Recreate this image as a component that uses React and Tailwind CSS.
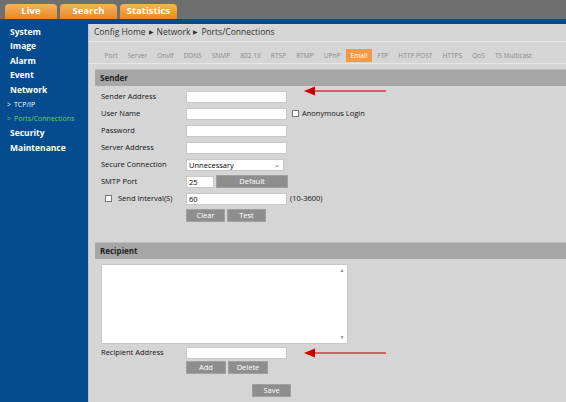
import React from "react";

const font = { fontFamily: '"Open Sans", "Noto Sans", sans-serif' };

function Arrow({ top }) {
  return (
    <svg className="absolute" style={{ left: 303, top: top - 6 }} width="86" height="12" viewBox="0 0 86 12">
      <line x1="10" y1="6" x2="83" y2="6" stroke="#d23a3a" strokeWidth="1.3" />
      <polygon points="1,6 12,1.5 12,10.5" fill="#c80000" />
    </svg>
  );
}

function Input({ w = "w-[101px]", children }) {
  return (
    <div className={`${w} h-[12px] bg-white border border-[#c8c8c8] text-[7.5px] leading-[10px] pl-[2px] text-black`}>{children}</div>
  );
}

function Btn({ w = "w-[39px]", children }) {
  return (
    <div className={`${w} h-[13px] bg-[#8e8e8e] border border-[#a0a0a0] text-white text-[7.5px] leading-[11px] flex items-center justify-center`}>{children}</div>
  );
}

function Row({ label, children, check }) {
  return (
    <div className="h-[17px] flex items-center">
      <div className="w-[85px] flex items-center text-[7.5px] text-[#111]">
        {check && <div className="w-[7px] h-[7px] border border-[#777] bg-white ml-[4px] mr-[6px]" />}
        {label}
      </div>
      {children}
    </div>
  );
}

export default function App() {
  const tabs = ["Port", "Server", "Onvif", "DDNS", "SNMP", "802.1X", "RTSP", "RTMP", "UPnP", "Email", "FTP", "HTTP POST", "HTTPS", "QoS", "TS Multicast"];
  const side = [
    ["System", 0],
    ["Image", 0],
    ["Alarm", 0],
    ["Event", 0],
    ["Network", 0],
    ["TCP/IP", 1],
    ["Ports/Connections", 2],
    ["Security", 0],
    ["Maintenance", 0],
  ];
  return (
    <div className="w-[566px] h-[402px] overflow-hidden relative flex flex-col bg-[#054b8f]" style={font}>
      {/* top bar */}
      <div className="h-[19px] bg-[#6f6f6f] flex items-end pl-[5px] gap-[3px] shrink-0">
        {["Live", "Search", "Statistics"].map((t, i) => (
          <div
            key={t}
            className={`${i === 0 ? "w-[52px]" : "w-[57px]"} h-[15px] rounded-t-[4px] bg-gradient-to-b from-[#f6b35a] to-[#e48a22] text-white font-bold text-[9.5px] flex items-center justify-center`}
          >
            {t}
          </div>
        ))}
      </div>
      <div className="flex flex-1 pt-[5px]">
        {/* sidebar */}
        <div className="w-[88px] shrink-0 flex flex-col pt-[1px]">
          {side.map(([t, k]) => (
            <div key={t} className="h-[14.5px] flex items-center">
              {k === 0 ? (
                <span className="pl-[10px] text-white font-bold text-[8.5px]">{t}</span>
              ) : (
                <span className={`pl-[7px] text-[7px] ${k === 2 ? "text-[#5fd35f]" : "text-white"}`}>
                  <span className="mr-[3px]">&gt;</span>
                  {t}
                </span>
              )}
            </div>
          ))}
        </div>
        {/* content */}
        <div className="flex-1 bg-[#d5d5d5] border-l border-[#b9c3cf] relative flex flex-col">
          <div className="h-[18px] flex items-center pl-[5px] text-[8.5px] text-[#333] border-b border-[#e8e8e8] shrink-0">
            Config Home <span className="mx-[3px] text-[6px]">▶</span> Network <span className="mx-[3px] text-[6px]">▶</span> Ports/Connections
          </div>
          <div className="h-[22px] flex items-end pl-[11px] border-b border-[#e6e6e6] pb-[1px] shrink-0">
            <div className="flex items-center gap-[1px] h-[13px]">
              {tabs.map((t) => (
                <div
                  key={t}
                  className={`h-[13px] px-[4.5px] flex items-center text-[6.6px] ${t === "Email" ? "bg-[#f39a45] text-white" : "text-[#8a8a8a]"}`}
                >
                  {t}
                </div>
              ))}
            </div>
          </div>
          <div className="pl-[6px] pt-[5px]">
            <div className="h-[17px] bg-[#a6a6a6] border-t border-[#bdbdbd] flex items-center pl-[5px] text-[8px] font-bold text-[#222]">Sender</div>
            <div className="pl-[6px] pt-[2px]">
              <Row label="Sender Address"><Input /></Row>
              <Row label="User Name">
                <Input />
                <div className="w-[7px] h-[7px] border border-[#777] bg-white ml-[5px] mr-[3px]" />
                <span className="text-[7.5px] text-[#111]">Anonymous Login</span>
              </Row>
              <Row label="Password"><Input /></Row>
              <Row label="Server Address"><Input /></Row>
              <Row label="Secure Connection">
                <div className="w-[98px] h-[12px] bg-white border border-[#c8c8c8] text-[7.5px] leading-[10px] pl-[2px] flex items-center justify-between pr-[3px]">
                  <span>Unnecessary</span>
                  <span className="text-[7px] text-[#666]">⌄</span>
                </div>
              </Row>
              <Row label="SMTP Port">
                <Input w="w-[28px]">25</Input>
                <div className="ml-[2px]"><Btn w="w-[72px]">Default</Btn></div>
              </Row>
              <Row label="Send Interval(S)" check>
                <Input>60</Input>
                <span className="ml-[3px] text-[7.5px] text-[#111]">(10-3600)</span>
              </Row>
              <div className="h-[17px] flex items-center pl-[85px] gap-[2px]">
                <Btn>Clear</Btn>
                <Btn>Test</Btn>
              </div>
            </div>
            <div className="mt-[18px] h-[17px] bg-[#a6a6a6] border-t border-[#bdbdbd] flex items-center pl-[5px] text-[8px] font-bold text-[#222]">Recipient</div>
            <div className="pl-[6px] pt-[5px]">
              <div className="w-[247px] h-[80px] bg-white border border-[#c8c8c8] flex justify-end">
                <div className="w-[6px] flex flex-col justify-between items-center py-[2px] mr-[2px] text-[5px] text-[#888]">
                  <span>▲</span>
                  <span>▼</span>
                </div>
              </div>
              <Row label="Recipient Address"><Input /></Row>
              <div className="flex pl-[85px] gap-[2px]">
                <Btn w="w-[40px]">Add</Btn>
                <Btn w="w-[40px]">Delete</Btn>
              </div>
              <div className="flex pl-[151px] pt-[10px]">
                <Btn>Save</Btn>
              </div>
            </div>
          </div>
        </div>
      </div>
      <Arrow top={91} />
      <Arrow top={353} />
    </div>
  );
}
